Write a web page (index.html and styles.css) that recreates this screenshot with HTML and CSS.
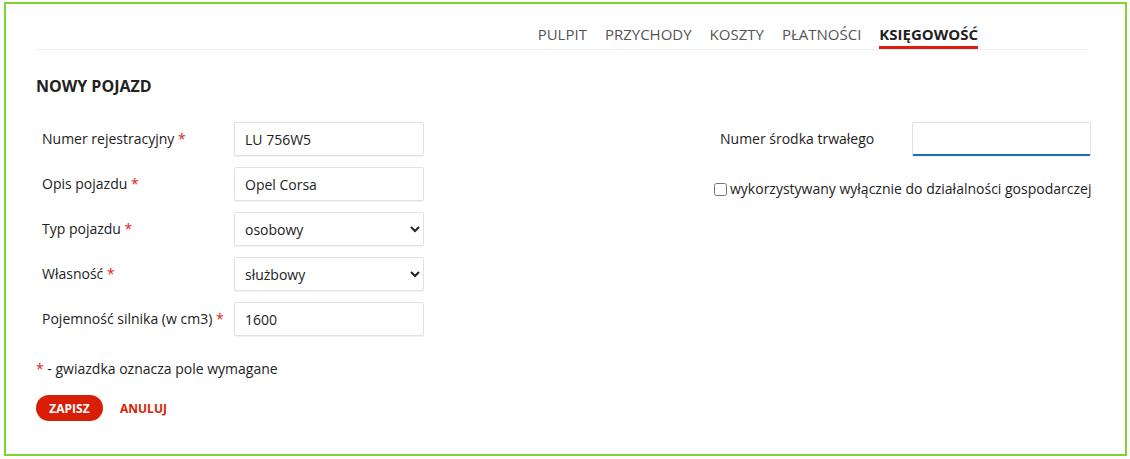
FILE: index.html
```html
<!DOCTYPE html>
<html lang="pl">
<head>
<meta charset="utf-8">
<title>Nowy pojazd</title>
<link rel="stylesheet" href="styles.css">
</head>
<body>
<div class="frame">
  <header class="topbar">
    <nav class="nav">
      <a class="nav-link">PULPIT</a>
      <a class="nav-link">PRZYCHODY</a>
      <a class="nav-link">KOSZTY</a>
      <a class="nav-link">PŁATNOŚCI</a>
      <a class="nav-link active">KSIĘGOWOŚĆ</a>
    </nav>
  </header>
  <h1 class="title">NOWY POJAZD</h1>
  <form class="form">
    <div class="col col-left">
      <div class="row">
        <label class="label">Numer rejestracyjny <span class="req">*</span></label>
        <input class="field" type="text" value="LU 756W5">
      </div>
      <div class="row">
        <label class="label">Opis pojazdu <span class="req">*</span></label>
        <input class="field" type="text" value="Opel Corsa">
      </div>
      <div class="row">
        <label class="label">Typ pojazdu <span class="req">*</span></label>
        <select class="field select"><option>osobowy</option></select>
      </div>
      <div class="row">
        <label class="label">Własność <span class="req">*</span></label>
        <select class="field select"><option>służbowy</option></select>
      </div>
      <div class="row">
        <label class="label">Pojemność silnika (w cm3) <span class="req">*</span></label>
        <input class="field" type="text" value="1600">
      </div>
    </div>
    <div class="col col-right">
      <div class="row">
        <label class="label">Numer środka trwałego</label>
        <input class="field field-focus" type="text" value="">
      </div>
      <label class="check"><input type="checkbox" class="checkbox"> wykorzystywany wyłącznie do działalności gospodarczej</label>
    </div>
  </form>
  <p class="note"><span class="req">*</span> - gwiazdka oznacza pole wymagane</p>
  <div class="actions">
    <button class="btn-save" type="button">ZAPISZ</button>
    <a class="btn-cancel">ANULUJ</a>
  </div>
</div>
</body>
</html>
```
FILE: styles.css
```css
html, body {
  margin: 0;
  padding: 0;
  background: #fff;
}
body {
  font-family: "Open Sans", "Liberation Sans", sans-serif;
  color: #222;
}
.frame {
  box-sizing: border-box;
  width: 1123px;
  height: 454px;
  margin: 2px 0 0 4px;
  border: 2px solid #7ed52f;
  padding: 0 36px 0 30px;
}
.topbar {
  display: flex;
  justify-content: flex-end;
  padding-top: 20px;
  border-bottom: 1px solid #eeeeee;
  padding-right: 111px;
}
.nav {
  display: flex;
  gap: 18px;
}
.nav-link {
  font-size: 15px;
  line-height: 20px;
  color: #555;
  padding-bottom: 2px;
  border-bottom: 3px solid transparent;
}
.nav-link.active {
  font-weight: 700;
  color: #1f1f1f;
  border-bottom-color: #dd1f0a;
}
.title {
  margin: 26px 0 0;
  font-size: 16px;
  line-height: 20px;
  font-weight: 700;
  color: #222;
}
.form {
  display: flex;
  margin-top: 26px;
}
.col {
  display: flex;
  flex-direction: column;
  gap: 11px;
}
.col-left {
  width: 388px;
}
.col-right {
  margin-left: 290px;
  width: 377px;
  gap: 0;
}
.row {
  display: flex;
  align-items: center;
}
.label {
  width: 192px;
  padding-left: 6px;
  font-size: 14px;
  line-height: 20px;
  color: #222;
}
.req {
  color: #e32020;
}
.field {
  box-sizing: border-box;
  width: 190px;
  height: 34px;
  border: 1px solid #e2e2e2;
  border-radius: 2px;
  box-shadow: 0 1px 1px rgba(0, 0, 0, 0.06);
  padding: 0 10px;
  font-family: "Open Sans", "Liberation Sans", sans-serif;
  font-size: 14px;
  color: #222;
  background: #fff;
  outline: none;
}
.select {
  padding: 0 6px;
}
.field-focus {
  width: 179px;
  border-bottom: 2px solid #1a70b8;
}
.check {
  display: flex;
  align-items: center;
  margin-top: 23px;
  font-size: 14px;
  line-height: 20px;
  color: #222;
  white-space: nowrap;
}
.checkbox {
  margin: 0 3px 0 0;
  width: 13px;
  height: 13px;
}
.note {
  margin: 23px 0 0;
  font-size: 14px;
  line-height: 20px;
  color: #222;
}
.actions {
  display: flex;
  align-items: center;
  gap: 17px;
  margin-top: 16px;
}
.btn-save {
  height: 26px;
  width: 67px;
  border: none;
  border-radius: 13px;
  background: #d81e05;
  color: #fff;
  font-family: "Open Sans", "Liberation Sans", sans-serif;
  font-weight: 700;
  font-size: 12px;
  padding: 0;
}
.btn-cancel {
  font-size: 12px;
  font-weight: 700;
  color: #d81e05;
}
```
